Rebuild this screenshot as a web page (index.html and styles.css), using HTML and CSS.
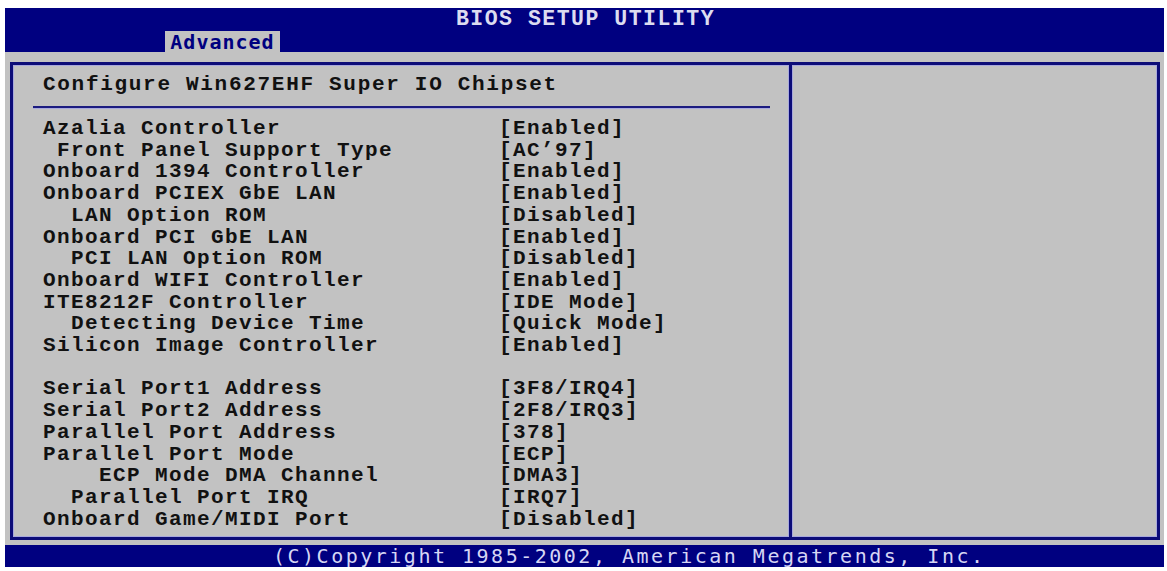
FILE: index.html
```html
<!DOCTYPE html>
<html lang="en">
<head>
	<meta charset="UTF-8">
	<title>BIOS SETUP UTILITY</title>
	<link rel="stylesheet" href="styles.css">
</head>
<body>
	<div class="screen">
		<div class="top">
			<div class="title">BIOS SETUP UTILITY</div>
			<div class="tabs"><span class="tab">Advanced</span></div>
		</div>
		<div class="main">
			<div class="frame">
				<div class="left">
					<div class="heading">Configure Win627EHF Super IO Chipset</div>
					<div class="rule"></div>
					<div class="items">
						<div class="label">Azalia Controller</div><div class="value">[Enabled]</div>
						<div class="label i1">Front Panel Support Type</div><div class="value">[AC’97]</div>
						<div class="label">Onboard 1394 Controller</div><div class="value">[Enabled]</div>
						<div class="label">Onboard PCIEX GbE LAN</div><div class="value">[Enabled]</div>
						<div class="label i2">LAN Option ROM</div><div class="value">[Disabled]</div>
						<div class="label">Onboard PCI GbE LAN</div><div class="value">[Enabled]</div>
						<div class="label i2">PCI LAN Option ROM</div><div class="value">[Disabled]</div>
						<div class="label">Onboard WIFI Controller</div><div class="value">[Enabled]</div>
						<div class="label">ITE8212F Controller</div><div class="value">[IDE Mode]</div>
						<div class="label i2">Detecting Device Time</div><div class="value">[Quick Mode]</div>
						<div class="label">Silicon Image Controller</div><div class="value">[Enabled]</div>
						<div class="label">&nbsp;</div><div class="value">&nbsp;</div>
						<div class="label">Serial Port1 Address</div><div class="value">[3F8/IRQ4]</div>
						<div class="label">Serial Port2 Address</div><div class="value">[2F8/IRQ3]</div>
						<div class="label">Parallel Port Address</div><div class="value">[378]</div>
						<div class="label">Parallel Port Mode</div><div class="value">[ECP]</div>
						<div class="label i4">ECP Mode DMA Channel</div><div class="value">[DMA3]</div>
						<div class="label i2">Parallel Port IRQ</div><div class="value">[IRQ7]</div>
						<div class="label">Onboard Game/MIDI Port</div><div class="value">[Disabled]</div>
					</div>
				</div>
				<div class="right"></div>
			</div>
		</div>
		<div class="bottom">(C)Copyright 1985-2002, American Megatrends, Inc.</div>
	</div>
</body>
</html>
```

FILE: styles.css
```css
body{
	margin: 0;
	background: #ffffff;
}
.screen{
	margin: 8px 3px 0 5px;
	width: 1159px;
}
.top{
	background: #000080;
	height: 44px;
	display: flex;
	flex-direction: column;
}
.title{
	height: 23px;
	line-height: 22px;
	text-align: center;
	color: #dcdcf0;
	font-family: "Courier New", "Nimbus Mono PS", "FreeMono", "Liberation Mono", monospace;
	font-weight: bold;
	font-size: 21.5px;
	letter-spacing: 1.5px;
	padding-left: 2px;
}
.tabs{
	height: 21px;
	padding-left: 160px;
}
.tab{
	display: inline-block;
	height: 21px;
	width: 115px;
	background: #c2c2c2;
	color: #000080;
	font-family: "DejaVu Sans Mono", monospace;
	font-weight: bold;
	font-size: 20px;
	line-height: 22px;
	text-align: center;
	letter-spacing: 1px;
}
.main{
	background: #c2c2c2;
	height: 493px;
	padding: 10px 4px 0 5px;
	box-sizing: border-box;
}
.frame{
	display: flex;
	height: 472px;
	border: 3px solid #0c0c78;
	box-shadow: inset 0 0 0 1px #a8a8dc;
}
.left{
	width: 779px;
	border-right: 3px solid #0c0c78;
	box-shadow: inset -1px 0 0 #a8a8dc, 1px 0 0 #a8a8dc;
	padding: 9px 0 0 30px;
	box-sizing: border-box;
	font-family: "Courier New", "Nimbus Mono PS", "FreeMono", "Liberation Mono", monospace;
	font-weight: bold;
	font-size: 21px;
	letter-spacing: 1.4px;
	color: #111111;
}
.right{
	flex: 1;
}
.heading{
	line-height: 22px;
	height: 22px;
	letter-spacing: 1.7px;
}
.rule{
	margin: 10px 19px 9px -10px;
	height: 2px;
	background: #1c1c80;
	border-bottom: 1px solid #a8a8dc;
}
.items{
	display: grid;
	grid-template-columns: 456px auto;
	line-height: 21.7px;
}
.i1{
	padding-left: 14px;
}
.i2{
	padding-left: 28px;
}
.i4{
	padding-left: 56px;
}
.label,.value{
	white-space: pre;
}
.bottom{
	height: 22px;
	background: #000080;
	color: #d6d6f4;
	font-family: "DejaVu Sans Mono", monospace;
	font-size: 20px;
	line-height: 22px;
	letter-spacing: 2.5px;
	padding-left: 268px;
	white-space: pre;
}
```
